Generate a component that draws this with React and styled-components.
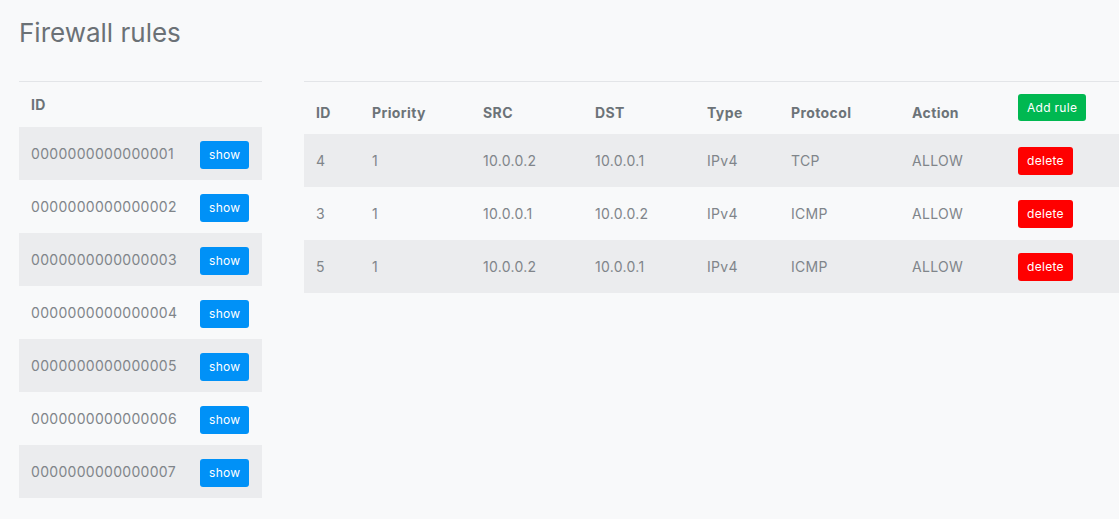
import styled, { createGlobalStyle } from 'styled-components'

const GlobalStyle = createGlobalStyle`
body {
    margin: 0;
    background: #f8f9fa;
    font-family: Inter, "Noto Sans", "Liberation Sans", sans-serif;
    overflow: hidden;
}
`

const switches = [1, 2, 3, 4, 5, 6, 7].map(n => String(n).padStart(16, '0'))

const rules = [
    { id: 4, priority: 1, src: '10.0.0.2', dst: '10.0.0.1', type: 'IPv4', proto: 'TCP', action: 'ALLOW' },
    { id: 3, priority: 1, src: '10.0.0.1', dst: '10.0.0.2', type: 'IPv4', proto: 'ICMP', action: 'ALLOW' },
    { id: 5, priority: 1, src: '10.0.0.2', dst: '10.0.0.1', type: 'IPv4', proto: 'ICMP', action: 'ALLOW' },
]

const widths = [56, 111, 112, 112, 84, 121, 106]

const App = () => {
    return (
        <Page>
            <GlobalStyle />
            <Title>Firewall rules</Title>
            <Panels>
                <Left>
                    <Table>
                        <colgroup>
                            <col />
                            <col style={{ width: 74 }} />
                        </colgroup>
                        <thead>
                            <tr><Th>ID</Th><Th /></tr>
                        </thead>
                        <tbody>
                            {switches.map(id => (
                                <Tr key={id}>
                                    <Td>{id}</Td>
                                    <Td $right><Button $color="#0091f7">show</Button></Td>
                                </Tr>
                            ))}
                        </tbody>
                    </Table>
                </Left>
                <Right>
                    <Table>
                        <colgroup>
                            {widths.map((w, i) => <col key={i} style={{ width: w }} />)}
                            <col />
                        </colgroup>
                        <thead>
                            <tr>
                                <Th $tall>ID</Th>
                                <Th $tall>Priority</Th>
                                <Th $tall>SRC</Th>
                                <Th $tall>DST</Th>
                                <Th $tall>Type</Th>
                                <Th $tall>Protocol</Th>
                                <Th $tall>Action</Th>
                                <Th $tall><Button $color="#00b851" $lift>Add rule</Button></Th>
                            </tr>
                        </thead>
                        <tbody>
                            {rules.map(r => (
                                <Tr key={r.id}>
                                    <Td>{r.id}</Td>
                                    <Td>{r.priority}</Td>
                                    <Td>{r.src}</Td>
                                    <Td>{r.dst}</Td>
                                    <Td>{r.type}</Td>
                                    <Td>{r.proto}</Td>
                                    <Td>{r.action}</Td>
                                    <Td><Button $color="#ff0000">delete</Button></Td>
                                </Tr>
                            ))}
                        </tbody>
                    </Table>
                </Right>
            </Panels>
        </Page>
    )
}

const Page = styled.div`
padding: 14px 0 0 19px;
`

const Title = styled.h1`
margin: 0;
font-size: 26px;
font-weight: 400;
line-height: 38px;
color: #6b7176;
`

const Panels = styled.div`
display: flex;
gap: 42px;
margin-top: 29px;
`

const Left = styled.div`
width: 243px;
flex: none;
`

const Right = styled.div`
flex: 1;
`

const Table = styled.table`
width: 100%;
border-collapse: collapse;
table-layout: fixed;
border-top: 1px solid #e3e5e8;
font-size: 14px;
line-height: 21px;
`

const Th = styled.th`
box-sizing: border-box;
text-align: left;
font-weight: 700;
color: #6c7378;
letter-spacing: 0.4px;
padding: ${p => (p.$tall ? '0 12px 11px' : '12px')};
height: ${p => (p.$tall ? '52px' : '45px')};
vertical-align: bottom;
white-space: nowrap;
`

const Tr = styled.tr`
&:nth-child(odd) {
    background: #ebecee;
}
`

const Td = styled.td`
height: 53px;
box-sizing: border-box;
padding: ${p => (p.$right ? '0 13px 0 12px' : '0 12px')};
color: #80858a;
letter-spacing: 0.3px;
vertical-align: middle;
text-align: ${p => (p.$right ? 'right' : 'left')};
white-space: nowrap;
`

const Button = styled.button`
background: ${p => p.$color};
color: #fff;
border: none;
border-radius: 3px;
font-family: inherit;
font-size: 12px;
line-height: 16px;
padding: 6px 9px;
height: ${p => (p.$lift ? '27px' : '28px')};
cursor: pointer;
position: relative;
top: ${p => (p.$lift ? '-2px' : '1px')};
letter-spacing: 0.3px;
`

export default App
